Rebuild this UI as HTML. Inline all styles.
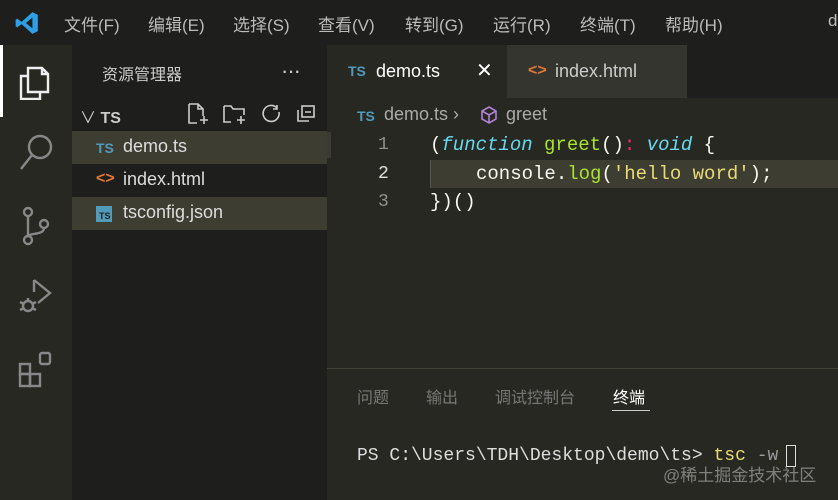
<!DOCTYPE html>
<html><head><meta charset="utf-8"><style>
*{margin:0;padding:0;box-sizing:border-box}
body{width:838px;height:500px;overflow:hidden;background:#272822;font-family:"Liberation Sans","Noto Sans CJK SC",sans-serif;color:#ccc;position:relative}
.abs{position:absolute;white-space:nowrap}
.title{left:0;top:0;width:838px;height:45px;background:#1e1f1c}
.menu{top:11px;font-size:17px;color:#bbb}
.act{left:0;top:45px;width:72px;height:455px;background:#272822}
.side{left:72px;top:45px;width:255px;height:455px;background:#1e1f1c}
.row{left:72px;width:255px;height:33px;font-size:18px;color:#ddd;line-height:33px}
.tabs{left:327px;top:45px;width:511px;height:53px;background:#1e1f1c}
.mono{font-family:"Liberation Mono","DejaVu Sans Mono",monospace}
.code{font-size:19px;color:#f8f8f2}
.ln{font-size:18px;color:#90908a;left:378px}
.ts{color:#519aba;font-weight:bold;font-size:14px}
</style></head><body>
<div class="abs title"></div>
<svg class="abs" style="left:14px;top:10px" width="26" height="26" viewBox="0 0 24 24"><path d="M17 2 L22 4.5 V19.5 L17 22 L7 13 L3 16 L1.5 15 V9 L3 8 L7 11 Z M17 7 L11 12 L17 17 Z" fill="#2f9ee6"/></svg>
<div class="abs menu" style="left:64px">文件(F)</div>
<div class="abs menu" style="left:148px">编辑(E)</div>
<div class="abs menu" style="left:233px">选择(S)</div>
<div class="abs menu" style="left:318px">查看(V)</div>
<div class="abs menu" style="left:405px">转到(G)</div>
<div class="abs menu" style="left:493px">运行(R)</div>
<div class="abs menu" style="left:580px">终端(T)</div>
<div class="abs menu" style="left:665px">帮助(H)</div>
<div class="abs menu" style="left:828px">d</div>
<div class="abs act"></div>
<div class="abs" style="left:0;top:45px;width:3px;height:72px;background:#fff"></div>
<svg class="abs" style="left:16px;top:60px" width="40" height="40" viewBox="0 0 40 40" fill="none" stroke="#eee" stroke-width="2.4"><path d="M12 8 H26 L32 14 V32 H12 Z M26 8 V14 H32"/><path d="M12 16 H5 V39 H24 V32"/></svg>
<svg class="abs" style="left:16px;top:132px" width="40" height="40" viewBox="0 0 40 40" fill="none" stroke="#888" stroke-width="2.4"><circle cx="24" cy="15" r="11"/><path d="M16 23 L5 37"/></svg>
<svg class="abs" style="left:18px;top:205px" width="36" height="42" viewBox="0 0 36 42" fill="none" stroke="#888" stroke-width="2.4"><circle cx="10" cy="7" r="4"/><circle cx="10" cy="35" r="4"/><circle cx="26" cy="19" r="4"/><path d="M10 11 V31 M26 23 C26 30 12 28 10 31"/></svg>
<svg class="abs" style="left:16px;top:278px" width="40" height="42" viewBox="0 0 40 42" fill="none" stroke="#888" stroke-width="2.4"><path d="M18 2 L34 15 L22 25"/><path d="M18 2 V14"/><circle cx="12" cy="28" r="5"/><path d="M4 24 L8 26 M4 32 L8 30 M20 24 L16 26 M20 32 L16 30 M12 20 V23"/></svg>
<svg class="abs" style="left:16px;top:350px" width="40" height="40" viewBox="0 0 40 40" fill="none" stroke="#888" stroke-width="2.4"><rect x="4" y="14" width="10" height="10"/><rect x="4" y="24" width="10" height="12"/><rect x="14" y="24" width="10" height="12"/><rect x="24" y="3" width="10" height="11" rx="2"/></svg>
<div class="abs side"></div>
<div class="abs" style="left:102px;top:61px;font-size:16px;color:#ccc">资源管理器</div>
<div class="abs" style="left:281px;top:58px;font-size:22px;color:#ccc;letter-spacing:-1px">···</div>
<div class="abs" style="left:80px;top:104px;font-size:16px;color:#ccc">∨ <b style="font-size:16px">TS</b></div>
<svg class="abs" style="left:186px;top:102px" width="132" height="24" viewBox="0 0 132 24" fill="none" stroke="#ccc" stroke-width="1.6"><path d="M3 2 H12 L17 7 V14 M12 2 V7 H17 M3 2 V21 H11 M14 18 H22 M18 14 V22"/><path d="M38 4 H45 L47 7 H58 V13 M38 4 V20 H45 M51 18 H59 M55 14 V22"/><path d="M91 6 A8 8 0 1 0 93 10 M91 3 V7 H87"/><rect x="116" y="4" width="12" height="11"/><path d="M112 8 V19 H123 M119 10 H125"/></svg>
<div class="abs row" style="top:131px;background:#3e3d32"></div>
<div class="abs row" style="top:197px;background:#3e3d32"></div>
<div class="abs ts" style="left:96px;top:140px">TS</div>
<div class="abs" style="left:123px;top:136px;font-size:18px;color:#ddd">demo.ts</div>
<div class="abs" style="left:96px;top:170px;font-size:16px;color:#e37933;font-weight:bold">&lt;&gt;</div>
<div class="abs" style="left:123px;top:169px;font-size:18px;color:#ddd">index.html</div>
<div class="abs" style="left:96px;top:206px;width:16px;height:16px;background:#519aba;color:#1e1f1c;font-size:9px;font-weight:bold;padding:5px 0 0 3px">TS</div>
<div class="abs" style="left:123px;top:202px;font-size:18px;color:#ddd">tsconfig.json</div>
<div class="abs tabs"></div>
<div class="abs" style="left:327px;top:45px;width:180px;height:53px;background:#272822"></div>
<div class="abs" style="left:507px;top:45px;width:180px;height:53px;background:#34352f"></div>
<div class="abs ts" style="left:348px;top:63px">TS</div>
<div class="abs" style="left:376px;top:61px;font-size:18px;color:#fff">demo.ts</div>
<div class="abs" style="left:476px;top:58px;font-size:20px;color:#fff">✕</div>
<div class="abs" style="left:528px;top:62px;font-size:16px;color:#e37933;font-weight:bold">&lt;&gt;</div>
<div class="abs" style="left:555px;top:61px;font-size:18px;color:#ccc">index.html</div>
<div class="abs ts" style="left:357px;top:108px">TS</div>
<div class="abs" style="left:384px;top:104px;font-size:18px;color:#aaa">demo.ts ›</div>
<svg class="abs" style="left:480px;top:106px" width="18" height="18" viewBox="0 0 18 18" fill="none" stroke="#b180d7" stroke-width="1.6"><path d="M9 1 L16 5 V13 L9 17 L2 13 V5 Z M2 5 L9 9 L16 5 M9 9 V17"/></svg>
<div class="abs" style="left:506px;top:104px;font-size:18px;color:#aaa">greet</div>
<div class="abs" style="left:327px;top:132px;width:4px;height:26px;background:#3a3b34"></div>
<div class="abs" style="left:430px;top:160px;width:408px;height:28px;background:#3e3d32;border-left:1px solid #555"></div>
<div class="abs mono ln" style="top:135px">1</div>
<div class="abs mono ln" style="top:164px;color:#e0e0e0">2</div>
<div class="abs mono ln" style="top:192px">3</div>
<div class="abs mono code" style="left:430px;top:134px">(<i style="color:#66d9ef">function</i> <span style="color:#a6e22e">greet</span>()<span style="color:#f92672">:</span> <i style="color:#66d9ef">void</i> {</div>
<div class="abs mono code" style="left:476px;top:163px">console.<span style="color:#a6e22e">log</span>(<span style="color:#e6db74">'hello word'</span>);</div>
<div class="abs mono code" style="left:430px;top:191px">})()</div>
<div class="abs" style="left:327px;top:368px;width:511px;height:1px;background:#414339"></div>
<div class="abs" style="left:357px;top:384px;font-size:16px;color:#777">问题</div>
<div class="abs" style="left:426px;top:384px;font-size:16px;color:#777">输出</div>
<div class="abs" style="left:495px;top:384px;font-size:16px;color:#777">调试控制台</div>
<div class="abs" style="left:613px;top:384px;font-size:16px;color:#fff">终端</div>
<div class="abs" style="left:612px;top:410px;width:38px;height:1px;background:#ccc"></div>
<div class="abs mono" style="left:357px;top:446px;font-size:18px;color:#ddd">PS C:\Users\TDH\Desktop\demo\ts&gt; <span style="color:#e6db74">tsc</span> <span style="color:#999">-w</span></div>
<div class="abs" style="left:786px;top:445px;width:10px;height:22px;border:1.5px solid #ddd"></div>
<div class="abs" style="left:663px;top:461px;font-size:17px;color:rgba(200,200,200,0.55)">@稀土掘金技术社区</div>
</body></html>
